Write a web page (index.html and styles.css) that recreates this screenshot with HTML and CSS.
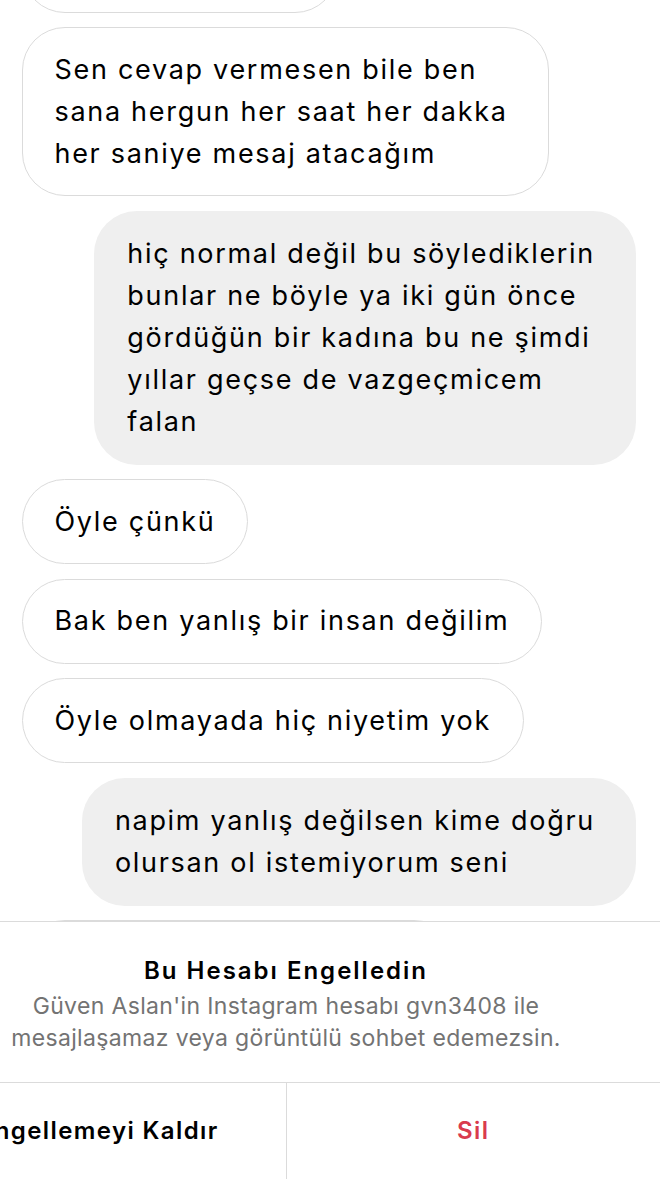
FILE: index.html
```html
<!DOCTYPE html>
<html lang="tr">
<head>
<meta charset="utf-8">
<title>Sohbet</title>
<link rel="stylesheet" href="styles.css">
</head>
<body>
<div class="chat">
  <div class="msg in partial-top"></div>
  <div class="msg in multi">Sen cevap vermesen bile ben<br>sana hergun her saat her dakka<br>her saniye mesaj atacağım</div>
  <div class="msg out multi">hiç normal değil bu söylediklerin<br>bunlar ne böyle ya iki gün önce<br>gördüğün bir kadına bu ne şimdi<br>yıllar geçse de vazgeçmicem<br>falan</div>
  <div class="msg in">Öyle çünkü</div>
  <div class="msg in">Bak ben yanlış bir insan değilim</div>
  <div class="msg in">Öyle olmayada hiç niyetim yok</div>
  <div class="msg out multi">napim yanlış değilsen kime doğru<br>olursan ol istemiyorum seni</div>
  <div class="msg in partial-bottom"></div>
</div>
<div class="blocked">
  <div class="blocked-info">
    <div class="blocked-title">Bu Hesabı Engelledin</div>
    <div class="blocked-text">Güven Aslan'in Instagram hesabı gvn3408 ile<br>mesajlaşamaz veya görüntülü sohbet edemezsin.</div>
  </div>
  <div class="blocked-actions">
    <div class="action">Engellemeyi Kaldır</div>
    <div class="action danger">Sil</div>
  </div>
</div>
</body>
</html>
```
FILE: styles.css
```css
html, body {
  margin: 0;
  padding: 0;
  background: #fff;
  overflow: hidden;
  height: 1179px;
}
body {
  font-family: Inter, "Noto Sans", sans-serif;
  color: #000;
}
.chat {
  display: flex;
  flex-direction: column;
  align-items: flex-start;
  gap: 14.5px;
  padding: 0 24px 0 22px;
}
.msg {
  box-sizing: border-box;
  font-size: 27px;
  letter-spacing: 1.7px;
  line-height: 42px;
  white-space: nowrap;
  border-radius: 43px;
}
.msg.in {
  background: #fff;
  border: 1.5px solid #dbdbdb;
  padding: 20.5px 32px 20.5px 31.5px;
}
.msg.out {
  align-self: flex-end;
  background: #efefef;
  padding: 22px 33px;
}
.msg.in.multi {
  padding-right: 40px;
}
.msg.out.multi {
  padding-right: 41px;
}
.partial-top {
  width: 316px;
  height: 86px;
  margin-top: -73.5px;
}
.partial-bottom {
  width: 435px;
  height: 86px;
}
.blocked {
  position: fixed;
  left: -88px;
  bottom: 0;
  width: 748px;
  height: 257px;
  background: #fff;
  border-top: 1px solid #dbdbdb;
  display: flex;
  flex-direction: column;
}
.blocked-info {
  padding-top: 33px;
  text-align: center;
  height: 160px;
  box-sizing: border-box;
}
.blocked-title {
  font-size: 24px;
  font-weight: 600;
  letter-spacing: 2px;
  line-height: 32px;
}
.blocked-text {
  margin-top: 3px;
  font-size: 23px;
  letter-spacing: 0.35px;
  line-height: 32px;
  color: #737373;
}
.blocked-actions {
  flex: 1;
  display: flex;
  border-top: 1px solid #dbdbdb;
}
.action {
  flex: 1;
  display: flex;
  align-items: center;
  justify-content: center;
  font-size: 24px;
  font-weight: 600;
  letter-spacing: 1.4px;
  padding-bottom: 2px;
}
.action + .action {
  border-left: 1px solid #dbdbdb;
}
.action.danger {
  color: #d93b4d;
}
```
